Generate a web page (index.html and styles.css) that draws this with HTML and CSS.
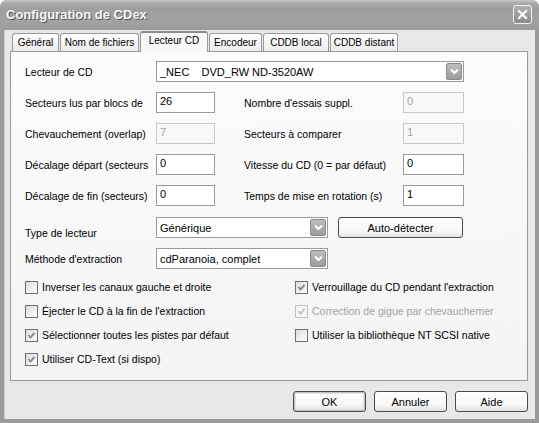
FILE: index.html
```html
<!DOCTYPE html>
<html>
<head>
    <title>Configuration de CDex</title>
    <link rel="stylesheet" href="styles.css">
</head>
<body>
    <div class="window">
        <!-- Title bar -->
        <div class="titlebar">
            <span class="title">Configuration de CDex</span>
            <span class="close">
                <svg width="11" height="11" viewBox="0 0 11 11"><path d="M2 2 L9 9 M9 2 L2 9" stroke="#fff" stroke-width="2.2" stroke-linecap="square"/></svg>
            </span>
        </div>

        <div class="frame">
            <!-- Tabs -->
            <div class="tabs">
                <div class="tab tab-general">Général</div>
                <div class="tab tab-files">Nom de fichiers</div>
                <div class="tab tab-drive active">Lecteur CD</div>
                <div class="tab tab-encoder">Encodeur</div>
                <div class="tab tab-local">CDDB local</div>
                <div class="tab tab-remote">CDDB distant</div>
            </div>

            <!-- Lecteur CD page -->
            <div class="panel">
                <div class="row">
                    <span class="lbl">Lecteur de CD</span>
                    <div class="combo combo-drive">
                        <span class="combo-text">_NEC&nbsp;&nbsp;&nbsp;&nbsp;DVD_RW ND-3520AW</span>
                        <span class="drop"><svg width="9" height="7" viewBox="0 0 9 7"><path d="M1 1.5 L4.5 5 L8 1.5" fill="none" stroke="#fff" stroke-width="2"/></svg></span>
                    </div>
                </div>

                <div class="row">
                    <span class="lbl">Secteurs lus par blocs de</span>
                    <div class="input">26</div>
                    <span class="lbl-right">Nombre d'essais suppl.</span>
                    <div class="input input-right disabled">0</div>
                </div>

                <div class="row">
                    <span class="lbl">Chevauchement (overlap)</span>
                    <div class="input disabled">7</div>
                    <span class="lbl-right">Secteurs à comparer</span>
                    <div class="input input-right disabled">1</div>
                </div>

                <div class="row">
                    <span class="lbl">Décalage départ (secteurs</span>
                    <div class="input">0</div>
                    <span class="lbl-right">Vitesse du CD (0 = par défaut)</span>
                    <div class="input input-right">0</div>
                </div>

                <div class="row">
                    <span class="lbl">Décalage de fin (secteurs)</span>
                    <div class="input">0</div>
                    <span class="lbl-right">Temps de mise en rotation (s)</span>
                    <div class="input input-right">1</div>
                </div>

                <div class="row row-type">
                    <span class="lbl lbl-low">Type de lecteur</span>
                    <div class="combo combo-short">
                        <span class="combo-text">Générique</span>
                        <span class="drop"><svg width="9" height="7" viewBox="0 0 9 7"><path d="M1 1.5 L4.5 5 L8 1.5" fill="none" stroke="#fff" stroke-width="2"/></svg></span>
                    </div>
                    <button class="button btn-detect">Auto-détecter</button>
                </div>

                <div class="row">
                    <span class="lbl">Méthode d'extraction</span>
                    <div class="combo combo-short">
                        <span class="combo-text">cdParanoia, complet</span>
                        <span class="drop"><svg width="9" height="7" viewBox="0 0 9 7"><path d="M1 1.5 L4.5 5 L8 1.5" fill="none" stroke="#fff" stroke-width="2"/></svg></span>
                    </div>
                </div>

                <!-- Options -->
                <div class="checks">
                    <div class="check"><span class="box"></span>Inverser les canaux gauche et droite</div>
                    <div class="check"><span class="box checked"><svg width="9" height="9" viewBox="0 0 9 9"><path d="M1.5 4 L3.5 6.5 L7.5 2" fill="none" stroke="#8c8c8c" stroke-width="2"/></svg></span>Verrouillage du CD pendant l'extraction</div>
                    <div class="check"><span class="box"></span>Éjecter le CD à la fin de l'extraction</div>
                    <div class="check disabled"><span class="box checked"><svg width="9" height="9" viewBox="0 0 9 9"><path d="M1.5 4 L3.5 6.5 L7.5 2" fill="none" stroke="#c4c4c4" stroke-width="2"/></svg></span>Correction de gigue par chevauchemer</div>
                    <div class="check"><span class="box checked"><svg width="9" height="9" viewBox="0 0 9 9"><path d="M1.5 4 L3.5 6.5 L7.5 2" fill="none" stroke="#8c8c8c" stroke-width="2"/></svg></span>Sélectionner toutes les pistes par défaut</div>
                    <div class="check"><span class="box"></span>Utiliser la bibliothèque NT SCSI native</div>
                    <div class="check"><span class="box checked"><svg width="9" height="9" viewBox="0 0 9 9"><path d="M1.5 4 L3.5 6.5 L7.5 2" fill="none" stroke="#8c8c8c" stroke-width="2"/></svg></span>Utiliser CD-Text (si dispo)</div>
                </div>
            </div>

            <!-- Dialog buttons -->
            <div class="actions">
                <button class="button btn-dialog btn-default">OK</button>
                <button class="button btn-dialog">Annuler</button>
                <button class="button btn-dialog">Aide</button>
            </div>
        </div>
    </div>
</body>
</html>
```

FILE: styles.css
```css
:root {
    --frame: #9a9a9a;
    --face: #e8e8e8;
    --page: #f8f8f8;
    --border: #999999;
    --field-border: #9a9a9a;
    --disabled-border: #c8c8c8;
    --disabled-text: #a3a3a3;
    --text: #000000;
}

* {
    margin: 0;
    padding: 0;
    box-sizing: border-box;
}

body {
    font-family: "Liberation Sans", Arial, sans-serif;
    font-size: 10.5px;
    color: var(--text);
    background-color: #ffffff;
}

.window {
    width: 539px;
    height: 423px;
    display: flex;
    flex-direction: column;
    background-color: var(--frame);
    border-radius: 7px 7px 0 0;
    overflow: hidden;
}

/* Title bar */
.titlebar {
    height: 30px;
    display: flex;
    align-items: center;
    justify-content: space-between;
    padding: 0 7px 2px 6px;
    background: linear-gradient(#c9c9c9 0, #aaaaaa 3px, #9e9e9e 9px, #a3a3a3 20px, #9a9a9a 30px);
}

.title {
    color: #f7f7f7;
    font-family: "Liberation Sans", Arial, sans-serif;
    font-weight: bold;
    font-size: 13px;
    text-shadow: 1px 1px 0 #555555;
}

.close {
    width: 19px;
    height: 19px;
    border: 1px solid #f4f4f4;
    border-radius: 3px;
    background: linear-gradient(#b0b0b0, #8a8a8a);
    display: flex;
    align-items: center;
    justify-content: center;
}

/* Window client area */
.frame {
    flex: 1;
    display: flex;
    flex-direction: column;
    margin: 0 4px 4px 4px;
    padding: 1px 7px 7px 5px;
    background-color: var(--face);
    border-left: 1px solid #c8c8c8;
}

/* Tabs */
.tabs {
    height: 20px;
    display: flex;
    align-items: flex-end;
    padding-left: 2px;
}

.tab {
    height: 18px;
    margin-right: 1px;
    border: 1px solid var(--border);
    border-bottom: none;
    border-radius: 3px 3px 0 0;
    background: linear-gradient(#ffffff, #ececec);
    display: flex;
    align-items: center;
    justify-content: center;
    white-space: nowrap;
    font-size: 10px;
}

.tab-general { width: 47px; }
.tab-files { width: 79px; }
.tab-drive { width: 68px; }
.tab-encoder { width: 53px; }
.tab-local { width: 66px; }
.tab-remote { width: 68px; }

.tab.active {
    height: 21px;
    margin-bottom: -1px;
    padding-bottom: 4px;
    position: relative;
    z-index: 1;
    background: var(--page);
    border-top: 2px solid #8c8c8c;
}

.panel {
    height: 330px;
    border: 1px solid var(--border);
    background: linear-gradient(#fcfcfc, #f4f4f4);
    padding: 9px 14px 0 14px;
    display: flex;
    flex-direction: column;
    gap: 10px;
}

/* Form rows */
.row {
    height: 21px;
    display: flex;
    align-items: center;
}

.row-type {
    margin-top: 1px;
}

.lbl {
    width: 131px;
    white-space: nowrap;
}

.lbl-low {
    padding-top: 10px;
}

.lbl-right {
    width: 159px;
    margin-left: 29px;
    white-space: nowrap;
}

.input {
    width: 59px;
    height: 21px;
    border: 1px solid var(--field-border);
    background-color: #ffffff;
    padding: 2px 3px;
    line-height: 13px;
    font-size: 11px;
    align-self: flex-start;
}

.input-right {
    width: 61px;
}

.input.disabled {
    border-color: var(--disabled-border);
    color: var(--disabled-text);
    background-color: var(--page);
}

.combo {
    height: 21px;
    border: 1px solid var(--field-border);
    background-color: #ffffff;
    display: flex;
    align-items: center;
    justify-content: space-between;
    padding: 0 1px 0 3px;
    font-size: 11px;
}

.combo-drive {
    width: 308px;
}

.combo-short {
    width: 172px;
}

.combo-text {
    white-space: pre;
}

.drop {
    width: 16px;
    height: 17px;
    border: 1px solid #8a8a8a;
    border-radius: 2px;
    background: linear-gradient(#bdbdbd, #9c9c9c);
    display: flex;
    align-items: center;
    justify-content: center;
}

/* Buttons */
.button {
    height: 21px;
    font-family: "Liberation Sans", Arial, sans-serif;
    font-size: 11px;
    color: var(--text);
    border: 1px solid #4a4a4a;
    border-radius: 3px;
    background: linear-gradient(#ffffff, #f6f6f6 70%, #e2e2e2);
}

.btn-detect {
    width: 125px;
    margin-left: 10px;
}

.btn-default {
    box-shadow: inset 0 0 0 1px #c4c4c4, inset 0 0 0 2px #e2e2e2;
}

/* Checkboxes */
.checks {
    margin-top: -4px;
    display: grid;
    grid-template-columns: 270px 1fr;
    grid-auto-rows: 24px;
}

.check {
    display: flex;
    align-items: center;
    gap: 4px;
    white-space: nowrap;
}

.box {
    width: 13px;
    height: 13px;
    border: 1px solid #6e6e6e;
    background: linear-gradient(135deg, #dcdcdc, #ffffff);
    display: flex;
    align-items: center;
    justify-content: center;
}

.check.disabled {
    color: var(--disabled-text);
}

.check.disabled .box {
    border-color: #c0c0c0;
    background: #f6f6f6;
}

/* Dialog buttons */
.actions {
    margin-top: 10px;
    display: flex;
    justify-content: flex-end;
    gap: 8px;
}

.btn-dialog {
    width: 73px;
}
```
